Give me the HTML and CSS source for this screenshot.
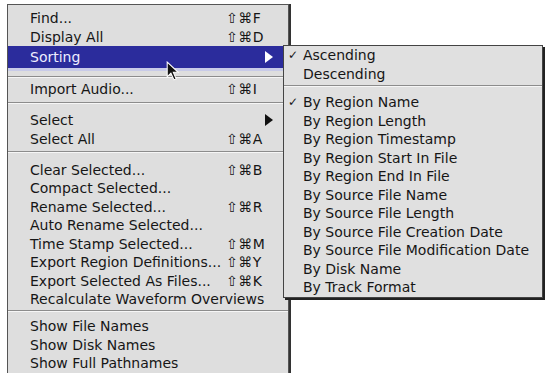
FILE: index.html
```html
<!DOCTYPE html>
<html lang="en">
<head>
    <meta charset="UTF-8">
    <meta name="viewport" content="width=device-width, initial-scale=1.0">
    <title>Regions Menu</title>
    <link rel="stylesheet" href="styles.css">
</head>
<body>
    <div class="screen">
        <div class="menu main-menu">
            <div class="item"><span>Find...</span><span class="key">⇧⌘F</span></div>
            <div class="item"><span>Display All</span><span class="key">⇧⌘D</span></div>
            <div class="item item-active"><span>Sorting</span><span class="arrow arrow-white"></span></div>
            <div class="sep"></div>
            <div class="item"><span>Import Audio...</span><span class="key">⇧⌘I</span></div>
            <div class="sep"></div>
            <div class="item"><span>Select</span><span class="arrow"></span></div>
            <div class="item"><span>Select All</span><span class="key">⇧⌘A</span></div>
            <div class="sep"></div>
            <div class="item"><span>Clear Selected...</span><span class="key">⇧⌘B</span></div>
            <div class="item"><span>Compact Selected...</span></div>
            <div class="item"><span>Rename Selected...</span><span class="key">⇧⌘R</span></div>
            <div class="item"><span>Auto Rename Selected...</span></div>
            <div class="item"><span>Time Stamp Selected...</span><span class="key">⇧⌘M</span></div>
            <div class="item"><span>Export Region Definitions...</span><span class="key">⇧⌘Y</span></div>
            <div class="item"><span>Export Selected As Files...</span><span class="key">⇧⌘K</span></div>
            <div class="item"><span>Recalculate Waveform Overviews</span></div>
            <div class="sep sep-short"></div>
            <div class="item"><span>Show File Names</span></div>
            <div class="item"><span>Show Disk Names</span></div>
            <div class="item"><span>Show Full Pathnames</span></div>
        </div>

        <div class="menu sub-menu">
            <div class="item checked">Ascending</div>
            <div class="item">Descending</div>
            <div class="sep"></div>
            <div class="item checked">By Region Name</div>
            <div class="item">By Region Length</div>
            <div class="item">By Region Timestamp</div>
            <div class="item">By Region Start In File</div>
            <div class="item">By Region End In File</div>
            <div class="item">By Source File Name</div>
            <div class="item">By Source File Length</div>
            <div class="item">By Source File Creation Date</div>
            <div class="item">By Source File Modification Date</div>
            <div class="item">By Disk Name</div>
            <div class="item">By Track Format</div>
        </div>

        <!-- mouse pointer over the Sorting item -->
        <svg class="pointer" width="15" height="21" viewBox="0 0 14 20">
            <path d="M1 1 L1 15 L4.5 11.5 L7.5 18 L9.5 17 L6.8 10.8 L11.5 10.8 Z" fill="#111" stroke="#fff" stroke-width="1"/>
        </svg>
    </div>
</body>
</html>
```

FILE: styles.css
```css
body {
    margin: 0;
    background-color: #fff;
    font-family: "DejaVu Sans", Verdana, sans-serif;
    font-size: 14px;
    color: #161616;
}

.screen {
    position: relative;
    width: 548px;
    height: 373px;
    overflow: hidden;
}

.menu {
    background-color: #dedede;
    border: 1px solid #555;
    box-sizing: border-box;
}

.main-menu {
    margin: 4px 0 0 7px;
    width: 282px;
    padding-top: 4px;
    box-shadow: 2px 0 0 #333;
}

.item {
    display: flex;
    align-items: center;
    height: 18.5px;
    padding: 0 22px 0 22px;
    white-space: nowrap;
}

.item-active {
    height: 22px;
    background-color: #2b2c9c;
    color: #eef;
    border-bottom: 3px solid #c8cbe8;
}

.key {
    margin-left: auto;
    width: 40px;
    font-size: 14px;
    letter-spacing: 0.5px;
}

.arrow {
    margin-left: auto;
    margin-right: -7px;
    width: 0;
    height: 0;
    border-top: 6px solid transparent;
    border-bottom: 6px solid transparent;
    border-left: 8px solid #111;
}

.arrow-white {
    border-left-color: #fff;
}

.sep {
    height: 12.5px;
    box-sizing: border-box;
    padding-top: 3px;
}

.sep::before {
    content: "";
    display: block;
    height: 1px;
    background-color: #8c8c8c;
    border-bottom: 1px solid #f6f6f6;
}

.item-active + .sep {
    height: 9px;
    padding-top: 5px;
}

.sep-short {
    height: 8.5px;
    padding-top: 1px;
}

.sub-menu {
    position: absolute;
    left: 283px;
    top: 45px;
    width: 260px;
    background-color: #e0e0e0;
    border-color: #444;
    box-shadow: 2px 2px 0 #222;
}

.sub-menu .item {
    position: relative;
    padding-left: 19px;
}

.sub-menu .sep {
    height: 10px;
    padding-top: 2px;
}

.checked::before {
    content: "✓";
    position: absolute;
    left: 4px;
    font-size: 12px;
}

.pointer {
    position: absolute;
    left: 166px;
    top: 61px;
}
```
